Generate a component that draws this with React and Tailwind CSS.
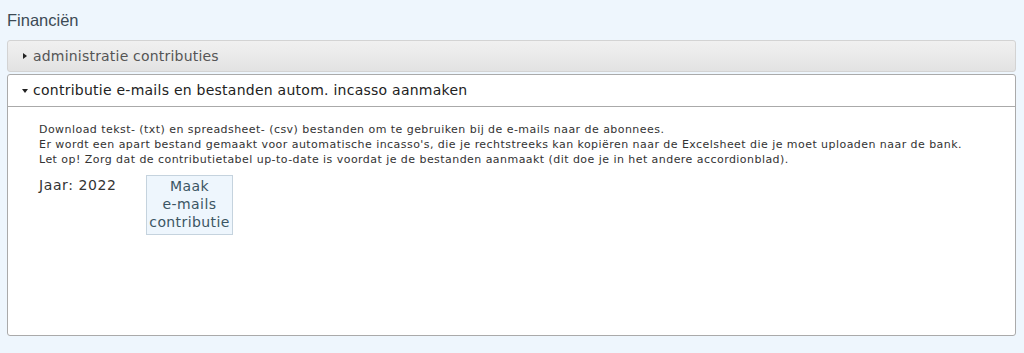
const App = () => {
  return (
    <div className="min-h-[353px] bg-[#eef6fd] px-[7px] pt-[10px] font-['DejaVu_Sans',Verdana,sans-serif]">
      <h1 className="text-[16.5px] leading-[20px] text-[#3c4a55] font-['Liberation_Sans',Arial,sans-serif] mb-[10px]">Financiën</h1>

      {/* closed accordion header */}
      <div className="h-[32px] w-[1009px] rounded-[3px] border border-[#d3d3d3] bg-gradient-to-b from-[#f0f0f0] via-[#eaeaea] to-[#e2e2e2] flex items-center pl-[15px] text-[14px] tracking-[0.2px] text-[#555]">
        <span className="w-0 h-0 border-y-[3.5px] border-y-transparent border-l-[4px] border-l-[#222] mr-[6px]" />
        administratie contributies
      </div>

      {/* open accordion */}
      <div className="mt-[2px] w-[1009px] rounded-[3px] border border-[#aaa] bg-white">
        <div className="h-[32px] flex items-center pl-[14px] text-[14px] tracking-[0.25px] text-[#222] border-b border-[#aaa]">
          <span className="w-0 h-0 border-x-[3.5px] border-x-transparent border-t-[4px] border-t-[#222] mr-[5px]" />
          contributie e-mails en bestanden autom. incasso aanmaken
        </div>
        <div className="h-[228px] pl-[31px] pt-[15px]">
          <p className="text-[11px] tracking-[0.45px] leading-[15px] text-[#333]">
            Download tekst- (txt) en spreadsheet- (csv) bestanden om te gebruiken bij de e-mails naar de abonnees.<br />
            Er wordt een apart bestand gemaakt voor automatische incasso's, die je rechtstreeks kan kopiëren naar de Excelsheet die je moet uploaden naar de bank.<br />
            Let op! Zorg dat de contributietabel up-to-date is voordat je de bestanden aanmaakt (dit doe je in het andere accordionblad).
          </p>
          <div className="flex items-start mt-[8px]">
            <span className="text-[14px] tracking-[0.6px] leading-[18px] text-[#333] w-[107px] mt-[1px]">Jaar: 2022</span>
            <button className="w-[87px] border border-[#c5d3de] bg-[#eef6fd] text-[14px] tracking-[0.4px] leading-[18px] text-[#3b5563] pt-[1px] pb-[3px] text-center">
              Maak<br />e-mails<br />contributie
            </button>
          </div>
        </div>
      </div>
    </div>
  );
};

export default App;
